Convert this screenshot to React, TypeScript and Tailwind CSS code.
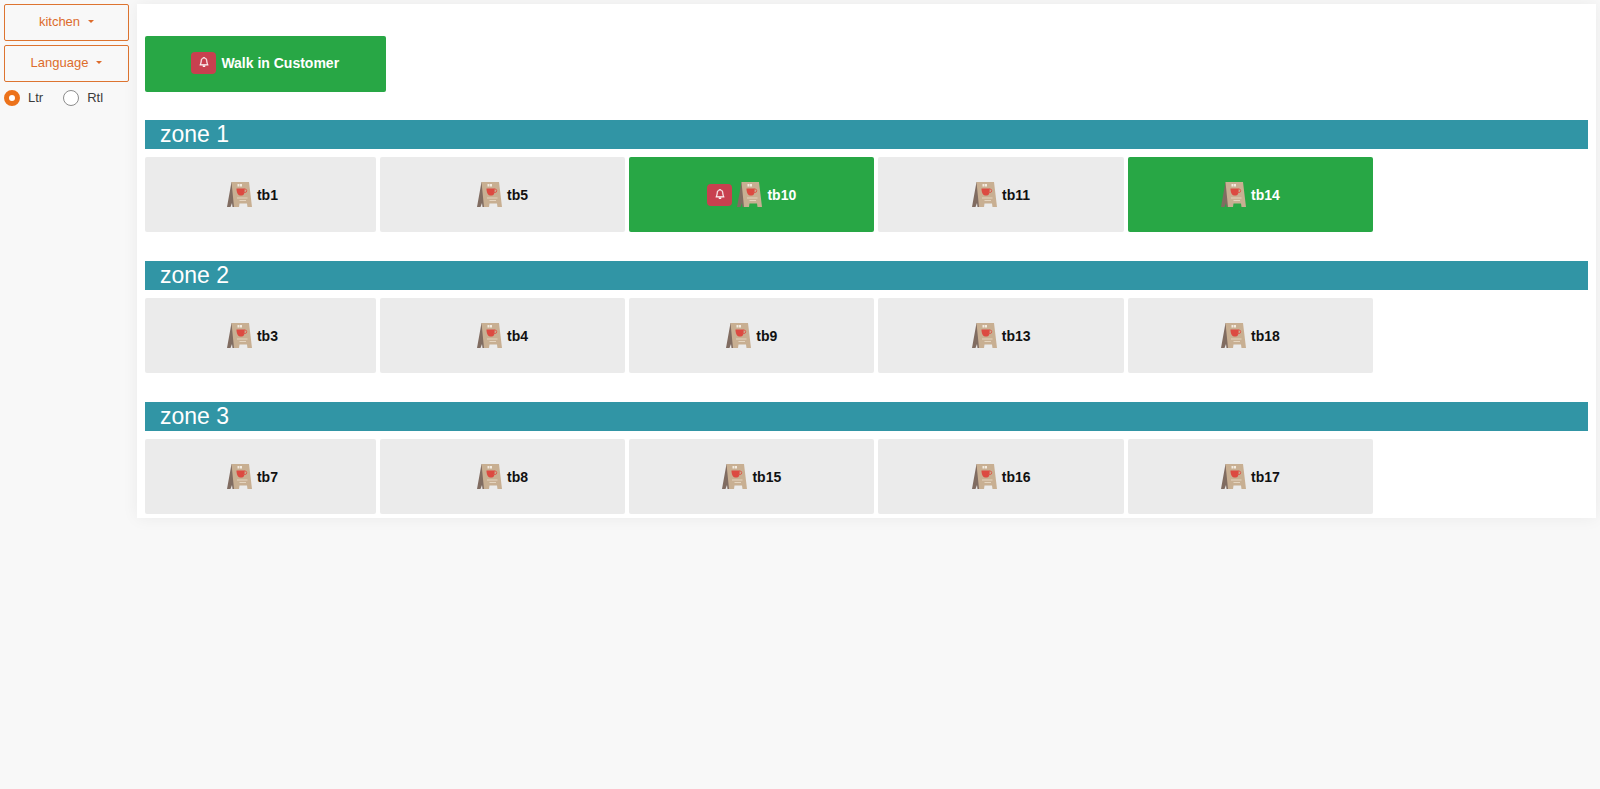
import React from 'react';
import clsx from 'clsx';
import { BsBell } from 'react-icons/bs';

type TableItem = {
  name: string;
  open?: boolean;
  ringing?: boolean;
};

type Zone = {
  name: string;
  tables: TableItem[];
};

const ZONES: Zone[] = [
  {
    name: 'zone 1',
    tables: [
      { name: 'tb1' },
      { name: 'tb5' },
      { name: 'tb10', open: true, ringing: true },
      { name: 'tb11' },
      { name: 'tb14', open: true },
    ],
  },
  {
    name: 'zone 2',
    tables: [{ name: 'tb3' }, { name: 'tb4' }, { name: 'tb9' }, { name: 'tb13' }, { name: 'tb18' }],
  },
  {
    name: 'zone 3',
    tables: [{ name: 'tb7' }, { name: 'tb8' }, { name: 'tb15' }, { name: 'tb16' }, { name: 'tb17' }],
  },
];

const BellBadge: React.FC = () => (
  <span className="flex h-[22px] w-[25px] shrink-0 items-center justify-center rounded bg-[#c8404f] pb-0.5 text-white">
    <BsBell size={10} stroke="currentColor" strokeWidth={0.7} />
  </span>
);

// Folding pavement sign with a coffee cup on it
const SignIcon: React.FC = () => (
  <svg viewBox="0 0 50 50" className="size-[25px] shrink-0" aria-hidden="true">
    <path d="M9 0 L16 6 L14 50 H11 L10 42 L7 50 H0 Z" fill="#806c61" />
    <path d="M9 0 H44 L50 50 H41 L40 43 H25 L24 50 H14 Z" fill="#c8af92" />
    <path d="M21 4 h4 v5 h-4 z M26 4 h4 v5 h-4 z" fill="#f3ebe0" />
    <path d="M19 13 H35 C36 21 34 27 30 27 H26 C22 27 19 21 19 13 Z" fill="#dc4a41" />
    <path d="M34 14 h2 a3 3 0 0 1 0 7 h-3" fill="none" stroke="#dc5d50" strokeWidth="2" />
    <path d="M20 32 H41 M25 37 H38" stroke="#e4d4bf" strokeWidth="2" />
  </svg>
);

const MenuButton: React.FC<{ label: string }> = ({ label }) => (
  <button
    type="button"
    aria-haspopup="menu"
    className="flex h-[37px] w-full items-center justify-center gap-2 rounded-xs border border-[#dd7430] pb-0.5 text-[13px] text-[#dd6c2c]"
  >
    {label}
    <svg viewBox="0 0 6 3" className="h-[3px] w-1.5" aria-hidden="true">
      <path d="M0 0 H6 L3 3 Z" fill="currentColor" />
    </svg>
  </button>
);

const DirectionRadio: React.FC<{ label: string; value: string; checked?: boolean }> = ({
  label,
  value,
  checked,
}) => (
  <label className="flex items-center gap-2 text-[13px] leading-4 text-[#3c3c3c]">
    <input
      type="radio"
      name="direction"
      value={value}
      defaultChecked={checked}
      className="size-4 appearance-none rounded-full border border-[#8c8c8c] bg-white checked:border-[5px] checked:border-[#ec721b]"
    />
    {label}
  </label>
);

const TableTile: React.FC<{ table: TableItem; first: boolean }> = ({ table, first }) => (
  <button
    type="button"
    className={clsx(
      'flex h-[75px] items-center justify-center gap-[5px] rounded-xs text-sm font-bold',
      first ? 'w-[16%] pr-4' : 'w-[17%]',
      table.open ? 'bg-[#28a745] text-white' : 'bg-[#ebebeb] text-[#111]',
    )}
  >
    {table.ringing && <BellBadge />}
    <SignIcon />
    {table.name}
  </button>
);

export default function App() {
  return (
    <div className="flex min-h-screen items-start gap-2 bg-[#f8f8f8] p-1 font-['Liberation_Sans',Arial,sans-serif]">
      <aside className="flex w-[125px] shrink-0 flex-col gap-1">
        <MenuButton label="kitchen" />
        <MenuButton label="Language" />
        <fieldset className="mt-1 flex gap-5">
          <DirectionRadio label="Ltr" value="ltr" checked />
          <DirectionRadio label="Rtl" value="rtl" />
        </fieldset>
      </aside>

      <main className="flex-1 bg-white px-2 pt-8 pb-1 shadow-[0_0_16px_rgba(0,0,0,0.06)]">
        <button
          type="button"
          className="flex h-14 w-1/6 items-center justify-center gap-[5px] rounded-xs bg-[#28a745] pb-0.5 text-sm font-bold text-white"
        >
          <BellBadge />
          Walk in Customer
        </button>

        <div className="mt-7 flex flex-col gap-[29px]">
          {ZONES.map((zone) => (
            <section key={zone.name}>
              <h2 className="bg-[#3195a5] pl-[15px] text-[23px] leading-[29px] text-white">{zone.name}</h2>
              <div className="mt-2 flex gap-1">
                {zone.tables.map((table, i) => (
                  <TableTile key={table.name} table={table} first={i === 0} />
                ))}
              </div>
            </section>
          ))}
        </div>
      </main>
    </div>
  );
}
